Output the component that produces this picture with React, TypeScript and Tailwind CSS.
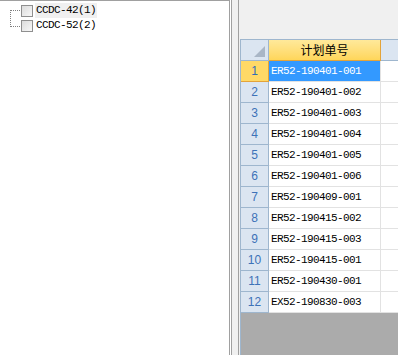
const rows = [
  "ER52-190401-001",
  "ER52-190401-002",
  "ER52-190401-003",
  "ER52-190401-004",
  "ER52-190401-005",
  "ER52-190401-006",
  "ER52-190409-001",
  "ER52-190415-002",
  "ER52-190415-003",
  "ER52-190415-001",
  "ER52-190430-001",
  "EX52-190830-003",
];

const mono = { fontFamily: "'Liberation Mono', 'Noto Sans CJK SC', monospace" };

function TreeItem({ label, active }: { label: string; active?: boolean }) {
  return (
    <div className="flex h-[15px] items-center">
      <div className="mr-[2px] h-[12px] w-[12px] border border-[#8f8f8f] bg-gradient-to-br from-[#dcdcdc] to-[#f8f8f8]" />
      <span
        className={`px-[1px] text-[11px] leading-[15px] tracking-[-0.6px] text-black ${active ? "bg-[#f0f0f0]" : ""}`}
        style={mono}
      >
        {label}
      </span>
    </div>
  );
}

export default function App() {
  return (
    <div className="flex h-[355px] w-[398px] overflow-hidden bg-white">
      {/* tree panel */}
      <div className="relative w-[229px] shrink-0 border-t border-[#a0a0a0] bg-white pt-[2px]">
        <div className="absolute left-[10px] top-[9px] h-[17px] w-[10px] border-b border-l border-t border-dotted border-[#808080]" />
        <div className="flex flex-col pl-[21px]">
          <TreeItem label="CCDC-42(1)" active />
          <TreeItem label="CCDC-52(2)" />
        </div>
      </div>

      {/* splitter */}
      <div className="flex w-[11px] shrink-0">
        <div className="w-px bg-[#a0a0a0]" />
        <div className="w-px bg-white" />
        <div className="w-px bg-[#a0a0a0]" />
        <div className="w-[6px] bg-[#f0f0f0]" />
        <div className="w-px bg-[#a0a0a0]" />
        <div className="w-px bg-[#f0f0f0]" />
      </div>

      {/* grid panel */}
      <div className="flex flex-1 flex-col bg-[#f0f0f0] pt-[39px]">
        <div className="flex flex-1 flex-col border-l border-t border-[#9eb6ce]">
          <div className="flex h-[21px] shrink-0">
            <div className="relative w-[28px] shrink-0 border-b border-r border-[#9eb6ce] bg-[#dbe5f1]">
              <div className="absolute bottom-[3px] right-[3px] h-0 w-0 border-b-[11px] border-l-[11px] border-b-[#a9b6c6] border-l-transparent" />
            </div>
            <div
              className="flex w-[112px] shrink-0 items-center justify-center border-b border-r border-[#e3a33a] bg-gradient-to-b from-[#ffe99a] to-[#ffd659] text-[12px] text-black"
              style={{ fontFamily: "'Noto Sans CJK SC', sans-serif" }}
            >
              计划单号
            </div>
            <div className="flex-1 border-b border-[#9eb6ce] bg-[#dbe5f1]" />
          </div>
          {rows.map((r, i) => (
            <div key={i} className="flex h-[21px] shrink-0">
              <div
                className={`flex w-[28px] shrink-0 items-center justify-center border-b border-r text-[12px] ${
                  i === 0
                    ? "border-[#e3a33a] bg-[#ffd966] text-[#2f6eb5]"
                    : "border-[#9eb6ce] bg-[#dbe5f1] text-[#3d72b8]"
                }`}
                style={{ fontFamily: "'Liberation Sans', sans-serif" }}
              >
                {i + 1}
              </div>
              <div
                className={`flex w-[112px] shrink-0 items-center border-b border-r border-[#e2e2e2] pl-[2px] text-[11px] tracking-[-0.6px] ${
                  i === 0 ? "bg-[#3399ff] text-white" : "bg-white text-black"
                }`}
                style={mono}
              >
                {r}
              </div>
              <div className="flex-1 border-b border-[#e2e2e2] bg-white" />
            </div>
          ))}
          <div className="flex-1 bg-[#ababab]" />
        </div>
      </div>
    </div>
  );
}
